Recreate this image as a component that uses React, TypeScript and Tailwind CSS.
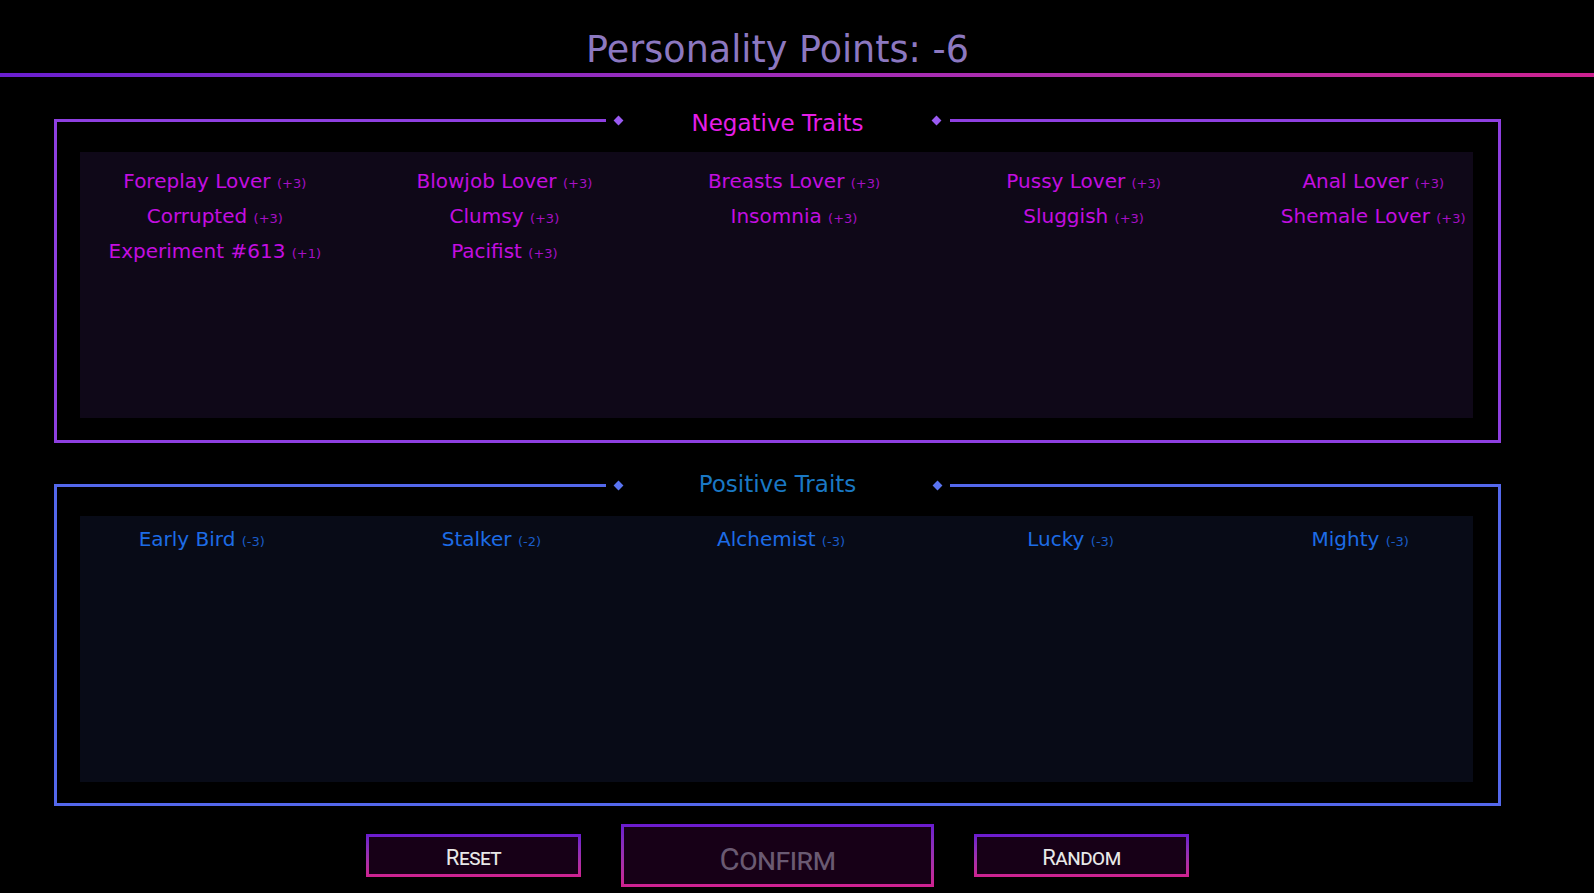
type Trait = { name: string; pts: string }

const negative: Trait[] = [
  { name: 'Foreplay Lover', pts: '+3' },
  { name: 'Blowjob Lover', pts: '+3' },
  { name: 'Breasts Lover', pts: '+3' },
  { name: 'Pussy Lover', pts: '+3' },
  { name: 'Anal Lover', pts: '+3' },
  { name: 'Corrupted', pts: '+3' },
  { name: 'Clumsy', pts: '+3' },
  { name: 'Insomnia', pts: '+3' },
  { name: 'Sluggish', pts: '+3' },
  { name: 'Shemale Lover', pts: '+3' },
  { name: 'Experiment #613', pts: '+1' },
  { name: 'Pacifist', pts: '+3' },
]

const positive: Trait[] = [
  { name: 'Early Bird', pts: '-3' },
  { name: 'Stalker', pts: '-2' },
  { name: 'Alchemist', pts: '-3' },
  { name: 'Lucky', pts: '-3' },
  { name: 'Mighty', pts: '-3' },
]

type PanelProps = {
  title: string
  traits: Trait[]
  lineCls: string
  borderCls: string
  diamondCls: string
  titleCls: string
  bodyCls: string
  innerCls: string
  gridCls: string
  nameCls: string
  ptsCls: string
}

function Panel(p: PanelProps) {
  return (
    <section className="mx-[54px]">
      <div className="flex items-center h-[3px]">
        <div className={`flex-1 h-[3px] ${p.lineCls}`} />
        <div className="w-[344px] shrink-0 flex items-center justify-between px-[9px]">
          <span className={`w-[7px] h-[7px] rotate-45 ${p.diamondCls}`} />
          <span className={`text-[23px] leading-[27px] whitespace-nowrap ${p.titleCls}`}>{p.title}</span>
          <span className={`w-[7px] h-[7px] rotate-45 ${p.diamondCls}`} />
        </div>
        <div className={`flex-1 h-[3px] ${p.lineCls}`} />
      </div>
      <div className={`border-x-[3px] border-b-[3px] pl-[23px] pr-[25px] ${p.borderCls} ${p.bodyCls}`}>
        <div className={`h-[266px] ${p.innerCls}`}>
          <div className={`grid grid-cols-5 w-[1448px] ${p.gridCls}`}>
            {p.traits.map(t => (
              <div key={t.name} className={`text-center whitespace-nowrap text-[20px] leading-[35px] ${p.nameCls}`}>
                {t.name} <span className={`text-[13px] leading-none ${p.ptsCls}`}>({t.pts})</span>
              </div>
            ))}
          </div>
        </div>
      </div>
    </section>
  )
}

function Btn({ label, big }: { label: string; big?: boolean }) {
  return (
    <div className={`bg-gradient-to-b from-[#6a1ad0] to-[#d0208f] p-[3px] ${big ? 'w-[313px] h-[63px]' : 'w-[215px] h-[43px]'}`}>
      <div
        className={`w-full h-full bg-[#170017] flex items-center justify-center font-['Roboto',sans-serif] [font-variant:small-caps] tracking-[-0.5px] ${
          big ? 'text-[31px] text-[#6a5a72] pt-[9px]' : 'text-[22px] text-[#e8e8e8] pt-[3px]'
        }`}
      >
        {label}
      </div>
    </div>
  )
}

export default function App() {
  return (
    <div className="w-full h-[893px] bg-black overflow-hidden font-['DejaVu_Sans',sans-serif]">
      <div className="w-[1555px] h-[73px] pt-[29px] text-center">
        <h1 className="text-[36.5px] leading-[42px] text-[#8c78c0]">Personality Points: -6</h1>
      </div>
      <div className="w-full h-[4px] bg-gradient-to-r from-[#6a1ed0] via-[#a02cb8] to-[#cc2190]" />
      <div className="w-[1555px]">
        <div className="mt-[42px]">
          <Panel
            title="Negative Traits"
            traits={negative}
            lineCls="bg-[#8e3fe0]"
            borderCls="border-[#8e3fe0]"
            diamondCls="bg-[#9a5af2]"
            titleCls="text-[#e61ee8] pt-[6px]"
            bodyCls="pt-[30px] pb-[22px]"
            innerCls="bg-[#0f0818]"
            gridCls="ml-[-10px] pt-[12px]"
            nameCls="text-[#c30ee0]"
            ptsCls="text-[#a510c4]"
          />
        </div>
        <div className="mt-[41px]">
          <Panel
            title="Positive Traits"
            traits={positive}
            lineCls="bg-[#5468ec]"
            borderCls="border-[#5468ec]"
            diamondCls="bg-[#5a74f2]"
            titleCls="text-[#1a78c4] pb-[2px]"
            bodyCls="pt-[29px] pb-[21px]"
            innerCls="bg-[#080b17]"
            gridCls="ml-[-23px] pt-[6px]"
            nameCls="text-[#1d6ce6]"
            ptsCls="text-[#1a5cc8]"
          />
        </div>
        <div className="mt-[18px] flex items-center justify-center gap-[40px]">
          <Btn label="Reset" />
          <Btn label="Confirm" big />
          <Btn label="Random" />
        </div>
      </div>
    </div>
  )
}
